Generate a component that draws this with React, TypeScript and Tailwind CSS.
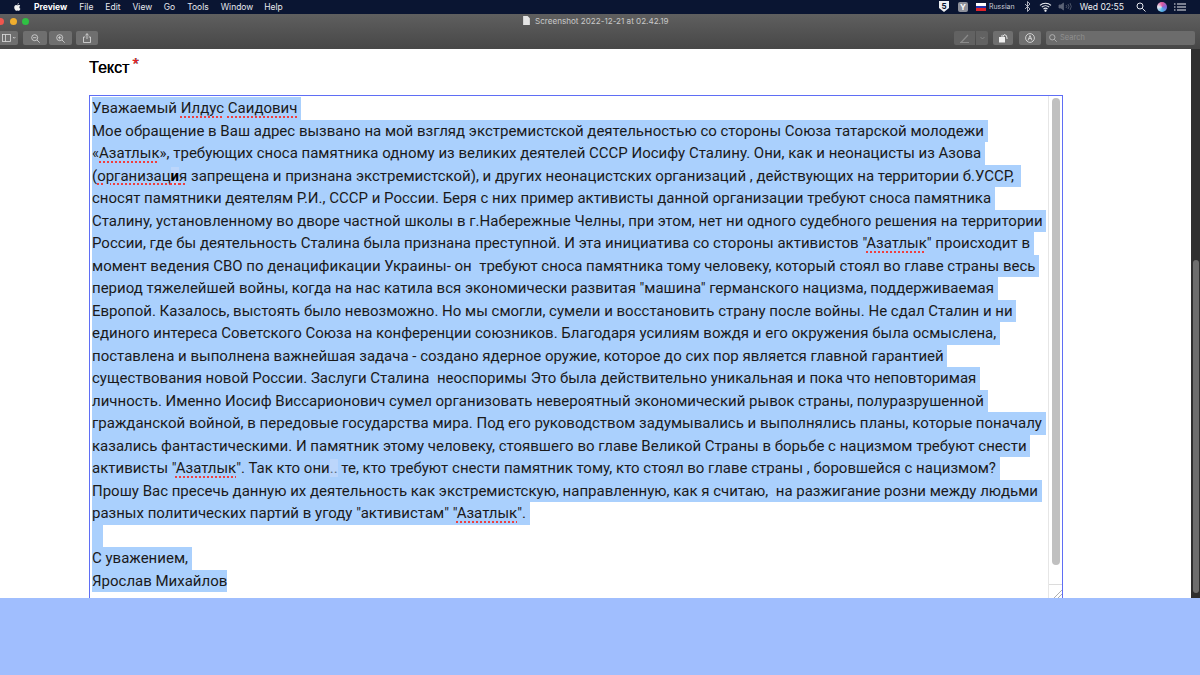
import React from "react";

const Sp = ({ children }: { children: React.ReactNode }) => (
  <span className="underline decoration-dotted decoration-[#ee3f3f] decoration-2 underline-offset-[3px]">{children}</span>
);

const lines: { n: React.ReactNode }[] = [
  { n: <>Уважаемый <Sp>Илдус</Sp> <Sp>Саидович</Sp>&nbsp;</> },
  { n: <>Мое обращение в Ваш адрес вызвано на мой взгляд экстремистской деятельностью со стороны Союза татарской молодежи&nbsp;</> },
  { n: <>«<Sp>Азатлык</Sp>», требующих сноса памятника одному из великих деятелей СССР Иосифу Сталину. Они, как и неонацисты из Азова&nbsp;</> },
  { n: <>(<Sp>организац<span className="bg-[#bcd6fb] font-bold text-black">и</span>я</Sp> запрещена и признана экстремистской), и других неонацистских организаций , действующих на территории б.УССР,&nbsp;&nbsp;</> },
  { n: <>сносят памятники деятелям Р.И., СССР и России. Беря с них пример активисты данной организации требуют сноса памятника&nbsp;</> },
  { n: <>Сталину, установленному во дворе частной школы в г.Набережные Челны, при этом, нет ни одного судебного решения на территории&nbsp;</> },
  { n: <>России, где бы деятельность Сталина была признана преступной. И эта инициатива со стороны активистов "<Sp>Азатлык</Sp>" происходит в&nbsp;</> },
  { n: <>момент ведения СВО по денацификации Украины- он&nbsp; требуют сноса памятника тому человеку, который стоял во главе страны весь&nbsp;</> },
  { n: <>период тяжелейшей войны, когда на нас катила вся экономически развитая "машина" германского нацизма, поддерживаемая&nbsp;</> },
  { n: <>Европой. Казалось, выстоять было невозможно. Но мы смогли, сумели и восстановить страну после войны. Не сдал Сталин и ни&nbsp;</> },
  { n: <>единого интереса Советского Союза на конференции союзников. Благодаря усилиям вождя и его окружения была осмыслена,&nbsp;</> },
  { n: <>поставлена и выполнена важнейшая задача - создано ядерное оружие, которое до сих пор является главной гарантией&nbsp;</> },
  { n: <>существования новой России. Заслуги Сталина&nbsp; неоспоримы Это была действительно уникальная и пока что неповторимая&nbsp;</> },
  { n: <>личность. Именно Иосиф Виссарионович сумел организовать невероятный экономический рывок страны, полуразрушенной&nbsp;</> },
  { n: <>гражданской войной, в передовые государства мира. Под его руководством задумывались и выполнялись планы, которые поначалу&nbsp;</> },
  { n: <>казались фантастическими. И памятник этому человеку, стоявшего во главе Великой Страны в борьбе с нацизмом требуют снести&nbsp;</> },
  { n: <>активисты "<Sp>Азатлык</Sp>". Так кто они<span className="bg-[#bcd6fb] text-[#5a6a80]">..</span>&nbsp;те, кто требуют снести памятник тому, кто стоял во главе страны , боровшейся с нацизмом?&nbsp;</> },
  { n: <>Прошу Вас пресечь данную их деятельность как экстремистскую, направленную, как я считаю,&nbsp; на разжигание розни между людьми&nbsp;</> },
  { n: <>разных политических партий в угоду "активистам" "<Sp>Азатлык</Sp>".&nbsp;</> },
  { n: <>&nbsp;&nbsp;&nbsp;</> },
  { n: <>С уважением,&nbsp;</> },
  { n: <>Ярослав Михайлов</> },
];

const Btn = ({ w, children }: { w: string; children?: React.ReactNode }) => (
  <div className={`${w} h-[14px] rounded-[2px] bg-[#6f6f6f] flex items-center justify-center`}>{children}</div>
);

export default function App() {
  return (
    <div className="w-[1200px] h-[675px] overflow-hidden flex flex-col bg-white font-['Roboto',sans-serif]">
      {/* menu bar */}
      <div className="h-[14px] bg-[#0a1532] shrink-0 flex items-center justify-between text-[8.5px] text-[#e6e8ee] font-['Inter',sans-serif]">
        <div className="flex items-center">
          <svg className="ml-[13px] w-[9px] h-[10px]" viewBox="0 0 24 24" fill="#f2f2f2">
            <path d="M17.05 12.5c0-2.6 2.1-3.8 2.2-3.9-1.2-1.8-3.1-2-3.7-2-1.6-.2-3.1.9-3.9.9s-2-.9-3.3-.9c-1.7 0-3.3 1-4.2 2.5-1.8 3.1-.5 7.7 1.3 10.2.9 1.2 1.9 2.6 3.2 2.6s1.8-.8 3.4-.8 2 .8 3.4.8 2.3-1.3 3.1-2.5c1-1.4 1.4-2.8 1.4-2.9-.1 0-2.9-1.1-2.9-4zM14.5 4.8c.7-.9 1.2-2 1-3.2-1 0-2.2.7-2.9 1.5-.6.7-1.2 1.9-1 3 1.1.1 2.2-.5 2.9-1.3z" />
          </svg>
          <span className="ml-[12px] font-bold text-white">Preview</span>
          <span className="ml-[12px]">File</span>
          <span className="ml-[12px]">Edit</span>
          <span className="ml-[12px]">View</span>
          <span className="ml-[11.5px]">Go</span>
          <span className="ml-[12px]">Tools</span>
          <span className="ml-[12px]">Window</span>
          <span className="ml-[11px]">Help</span>
        </div>
        <div className="flex items-center mr-[14px]">
          <svg className="w-[10px] h-[11px]" viewBox="0 0 10 11"><path d="M0 0h10v7l-5 4-5-4z" fill="#eceef2" /><text x="5" y="7.5" textAnchor="middle" fontSize="8" fontWeight="700" fill="#0a1532">5</text></svg>
          <div className="ml-[9px] w-[10px] h-[10px] rounded-[2px] bg-[#8d909a] text-[8px] font-bold text-white flex items-center justify-center">Y</div>
          <div className="ml-[8px] w-[10px] h-[8px] flex flex-col">
            <div className="h-1/3 bg-white" /><div className="h-1/3 bg-[#2233aa]" /><div className="h-1/3 bg-[#e0222a]" />
          </div>
          <span className="ml-[3px] text-[7px] text-[#c8cbd4]">Russian</span>
          <svg className="ml-[9px] w-[7px] h-[11px]" viewBox="0 0 7 11" fill="none" stroke="#d5d7de" strokeWidth="0.8"><path d="M1 3l5 5-2.5 2.5v-10L6 3 1 8" /></svg>
          <svg className="ml-[8px] w-[13px] h-[10px]" viewBox="0 0 13 10" fill="none" stroke="#eceef2" strokeWidth="1.1"><path d="M1 3.4a8 8 0 0 1 11 0M2.8 5.2a5.4 5.4 0 0 1 7.4 0M4.5 7a3 3 0 0 1 4 0" /><circle cx="6.5" cy="8.7" r="0.6" fill="#eceef2" /></svg>
          <svg className="ml-[6px] w-[14px] h-[9px]" viewBox="0 0 14 9" fill="none" stroke="#5b6376" strokeWidth="0.8"><path d="M1 3h2l2.500-2v7l-2.500-2h-2z" fill="#5b6376" /><path d="M8 3a2 2 0 0 1 0 3M10 2a4 4 0 0 1 0 5M12 1a6 6 0 0 1 0 7" /></svg>
          <span className="ml-[8px] text-[8.6px] text-[#eef0f4]">Wed 02:55</span>
          <svg className="ml-[12px] w-[10px] h-[10px]" viewBox="0 0 10 10" fill="none" stroke="#e6e8ee" strokeWidth="1"><circle cx="4" cy="4" r="3" /><path d="M6.300 6.300L9.500 9.500" /></svg>
          <div className="ml-[11px] w-[10px] h-[10px] rounded-full bg-[conic-gradient(#e0569b,#7b68d8,#4fb6e8,#e8e8f0,#e0569b)]" />
          <svg className="ml-[7px] w-[12px] h-[8px]" viewBox="0 0 12 8" stroke="#eceef2" strokeWidth="1"><path d="M3 1h9M3 4h9M3 7h9" /><path d="M0 1h1.500M0 4h1.500M0 7h1.500" /></svg>
        </div>
      </div>

      {/* title + toolbar */}
      <div className="h-[35px] shrink-0 bg-gradient-to-b from-[#5f5f5f] to-[#474747] flex flex-col relative">
        <div className="h-[14px] mb-[2px] flex items-center relative">
          <div className="absolute left-[-3px] w-[7px] h-[7px] rounded-full bg-[#f0564e]" />
          <div className="absolute left-[10px] w-[7px] h-[7px] rounded-full bg-[#f0ae2e]" />
          <div className="absolute left-[22px] w-[7px] h-[7px] rounded-full bg-[#2fc043]" />
          <div className="ml-[523px] flex items-center gap-[5px] text-[8.1px] text-[#c9c9c9] font-['Inter',sans-serif]">
            <svg className="w-[7px] h-[9px]" viewBox="0 0 6 8"><path d="M0 0h4l2 2v6H0z" fill="#e4e4e4" /></svg>
            <span>Screenshot 2022-12-21 at 02.42.19</span>
          </div>
        </div>
        <div className="flex items-center justify-between h-[16px]">
          <div className="flex items-center">
            <Btn w="w-[19px] ml-[-1px] rounded-l-none">
              <svg className="w-[14px] h-[8px]" viewBox="0 0 14 8" fill="none" stroke="#dcdcdc" strokeWidth="0.8"><rect x="0.500" y="0.500" width="8" height="7" /><path d="M3.500 0.500v7M11 3l1.200 1.300L13.400 3" /></svg>
            </Btn>
            <Btn w="w-[24px] ml-[5px]">
              <svg className="w-[9px] h-[9px]" viewBox="0 0 9 9" fill="none" stroke="#dcdcdc" strokeWidth="0.8"><circle cx="3.700" cy="3.700" r="3" /><path d="M2 3.700h3.400M6 6l2.700 2.700" /></svg>
            </Btn>
            <Btn w="w-[23px] ml-[2px]">
              <svg className="w-[9px] h-[9px]" viewBox="0 0 9 9" fill="none" stroke="#dcdcdc" strokeWidth="0.8"><circle cx="3.700" cy="3.700" r="3" /><path d="M2 3.700h3.400M3.700 2v3.400M6 6l2.700 2.700" /></svg>
            </Btn>
            <Btn w="w-[22px] ml-[4px]">
              <svg className="w-[8px] h-[10px]" viewBox="0 0 8 10" fill="none" stroke="#e0e0e0" strokeWidth="0.8"><path d="M2.300 4H.500v5.500h7V4H5.700M4 6V.700M2.400 2.200L4 .700l1.600 1.500" /></svg>
            </Btn>
          </div>
          <div className="flex items-center mr-[5px]">
            <div className="w-[21px] h-[14px] rounded-l-[2px] bg-[#626262] flex items-center justify-center">
              <svg className="w-[10px] h-[9px]" viewBox="0 0 10 9" fill="none" stroke="#8a8a8a" strokeWidth="1.200"><path d="M1 8.500L8 1M0 8.500h9" /></svg>
            </div>
            <div className="w-[12px] ml-[1px] h-[14px] rounded-r-[2px] bg-[#626262] flex items-center justify-center">
              <svg className="w-[5px] h-[4px]" viewBox="0 0 5 4" fill="none" stroke="#8f8f8f" strokeWidth="0.800"><path d="M.500 1l2 2 2-2" /></svg>
            </div>
            <Btn w="w-[20px] ml-[5px]">
              <svg className="w-[10px] h-[10px]" viewBox="0 0 10 10"><rect x="1" y="4" width="6" height="5.500" fill="#eeeeee" /><path d="M3 3h3l-1-1.200M6 1.500a3.300 3.300 0 0 1 3 3.500v1" fill="none" stroke="#eeeeee" strokeWidth="0.900" /></svg>
            </Btn>
            <Btn w="w-[22px] ml-[6px]">
              <svg className="w-[10px] h-[10px]" viewBox="0 0 10 10" fill="none" stroke="#e6e6e6" strokeWidth="0.800"><circle cx="5" cy="5" r="4.400" /><path d="M3 7.400L5 2.500l2 4.900M3.800 5.600h2.400" /></svg>
            </Btn>
            <div className="ml-[5px] w-[149px] h-[14px] rounded-[2px] bg-[#6c6c6c] flex items-center pl-[3px] gap-[3px]">
              <svg className="w-[8px] h-[8px]" viewBox="0 0 9 9" fill="none" stroke="#bdbdbd" strokeWidth="0.900"><circle cx="3.700" cy="3.700" r="3" /><path d="M6 6l2.700 2.700" /></svg>
              <span className="text-[7.500px] text-[#8f8f8f] font-['Inter',sans-serif]">Search</span>
            </div>
          </div>
        </div>
      </div>

      {/* content */}
      <div className="flex-1 min-h-0 flex bg-white">
        <div className="flex-1 min-w-0 pl-[89px] pt-[9px]">
          <div className="flex items-start h-[37px] text-[16px] leading-[20px] text-black font-['Liberation_Sans',sans-serif] [text-shadow:0.35px_0_0_#000]">
            Текст<span className="ml-[3px] text-[16px] leading-[14px] text-[#f0222a]">*</span>
          </div>
          <div className="w-[974px] h-[503px] border border-[#5f6ef5] border-b-0 flex">
            <div className="flex-1 min-w-0 pl-[2px] pt-[1px] text-[15px] leading-[22.5px] text-[#1a1a1a] whitespace-nowrap">
              {lines.map((l, i) => (
                <div key={i} className="w-fit bg-[#aad0fd] h-[22.5px]">{l.n}</div>
              ))}
            </div>
            <div className="w-[14px] shrink-0 border-l border-[#e6e6e6] flex flex-col">
              <div className="mx-auto mt-[2px] w-[8px] h-[467px] rounded-full bg-[#c0c0c0]" />
              <div className="mt-auto h-[14px] border-t border-[#dcdcdc] flex items-end justify-end">
                <svg className="w-[9px] h-[9px]" viewBox="0 0 9 9" stroke="#9a9a9a" strokeWidth="0.800"><path d="M1 9L9 1M5 9l4-4" /></svg>
              </div>
            </div>
          </div>
        </div>
        <div className="w-[9px] shrink-0 bg-[#2f2f2f] flex justify-center">
          <div className="mt-[211px] w-[6px] h-[333px] rounded-full bg-[#6e6e6e]" />
        </div>
      </div>

      {/* bottom band */}
      <div className="h-[77px] shrink-0 bg-[#a0befe]" />
    </div>
  );
}
